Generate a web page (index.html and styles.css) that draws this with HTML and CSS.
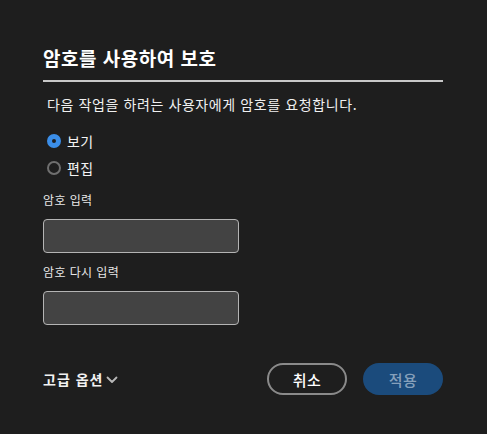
FILE: index.html
```html
<!DOCTYPE html>
<html lang="ko">
<head>
<meta charset="utf-8">
<link rel="stylesheet" href="styles.css">
</head>
<body>
<div class="dialog">
  <h1 class="title">암호를 사용하여 보호</h1>
  <p class="desc">다음 작업을 하려는 사용자에게 암호를 요청합니다.</p>
  <div class="radios">
    <label class="radio"><span class="dot checked"></span><span>보기</span></label>
    <label class="radio"><span class="dot"></span><span>편집</span></label>
  </div>
  <div class="field">
    <div class="flabel">암호 입력</div>
    <div class="input"></div>
  </div>
  <div class="field">
    <div class="flabel">암호 다시 입력</div>
    <div class="input"></div>
  </div>
  <div class="footer">
    <div class="adv">고급 옵션<svg class="chev" width="12" height="8" viewBox="0 0 12 8"><path d="M1.5 1.5 L6 6 L10.5 1.5" fill="none" stroke="#b8b8b8" stroke-width="1.8" stroke-linecap="round" stroke-linejoin="round"/></svg></div>
    <div class="btns">
      <div class="btn cancel">취소</div>
      <div class="btn apply">적용</div>
    </div>
  </div>
</div>
</body>
</html>
```

FILE: styles.css
```css
html, body {
  margin: 0;
  padding: 0;
  background: #1e1e1e;
}
body {
  font-family: "Noto Sans CJK KR", "Noto Sans", sans-serif;
  color: #e8e8e8;
  width: 487px;
  height: 434px;
  overflow: hidden;
}
.dialog {
  padding: 45px 44px 0 43px;
  display: flex;
  flex-direction: column;
}
.title {
  margin: 0;
  font-size: 19px;
  letter-spacing: 0.5px;
  font-weight: 700;
  line-height: 26px;
  color: #ffffff;
  padding-bottom: 9px;
  border-bottom: 2px solid #c8c8c8;
}
.desc {
  margin: 12px 0 0 4px;
  font-size: 14px;
  letter-spacing: 0.6px;
  line-height: 20px;
  color: #f0f0f0;
}
.radios {
  margin-top: 17px;
  margin-left: 4px;
  display: flex;
  flex-direction: column;
  gap: 7px;
}
.radio {
  display: flex;
  align-items: center;
  gap: 6px;
  font-size: 14px;
  letter-spacing: 0.3px;
  line-height: 20px;
  color: #f4f4f4;
}
.dot {
  width: 10px;
  height: 10px;
  border-radius: 50%;
  border: 2px solid #6f6f6f;
  box-sizing: content-box;
  flex: none;
}
.dot.checked {
  width: 4px;
  height: 4px;
  border: 5px solid #3b8ee8;
  background: #1e1e1e;
}
.field {
  margin-top: 13px;
  display: flex;
  flex-direction: column;
}
.field + .field {
  margin-top: 10px;
}
.flabel {
  font-size: 12px;
  letter-spacing: 0.4px;
  line-height: 18px;
  color: #e8e8e8;
  margin-bottom: 10px;
}
.input {
  width: 194px;
  height: 32px;
  background: #434343;
  border: 1px solid #b4b4b4;
  border-radius: 4px;
}
.footer {
  margin-top: 38px;
  display: flex;
  align-items: center;
  justify-content: space-between;
}
.adv {
  font-size: 14px;
  letter-spacing: 1px;
  font-weight: 700;
  color: #f2f2f2;
  display: flex;
  align-items: center;
  gap: 3px;
}
.chev {
  margin-top: 1px;
}
.btns {
  display: flex;
  gap: 16px;
}
.btn {
  width: 80px;
  height: 32px;
  box-sizing: border-box;
  border-radius: 16px;
  display: flex;
  align-items: center;
  justify-content: center;
  font-size: 15px;
  font-weight: 500;
  letter-spacing: 0.5px;
}
.cancel {
  border: 2px solid #8a8a8a;
  color: #ffffff;
}
.apply {
  background: #1b4b7c;
  color: #86a0bb;
}
```
